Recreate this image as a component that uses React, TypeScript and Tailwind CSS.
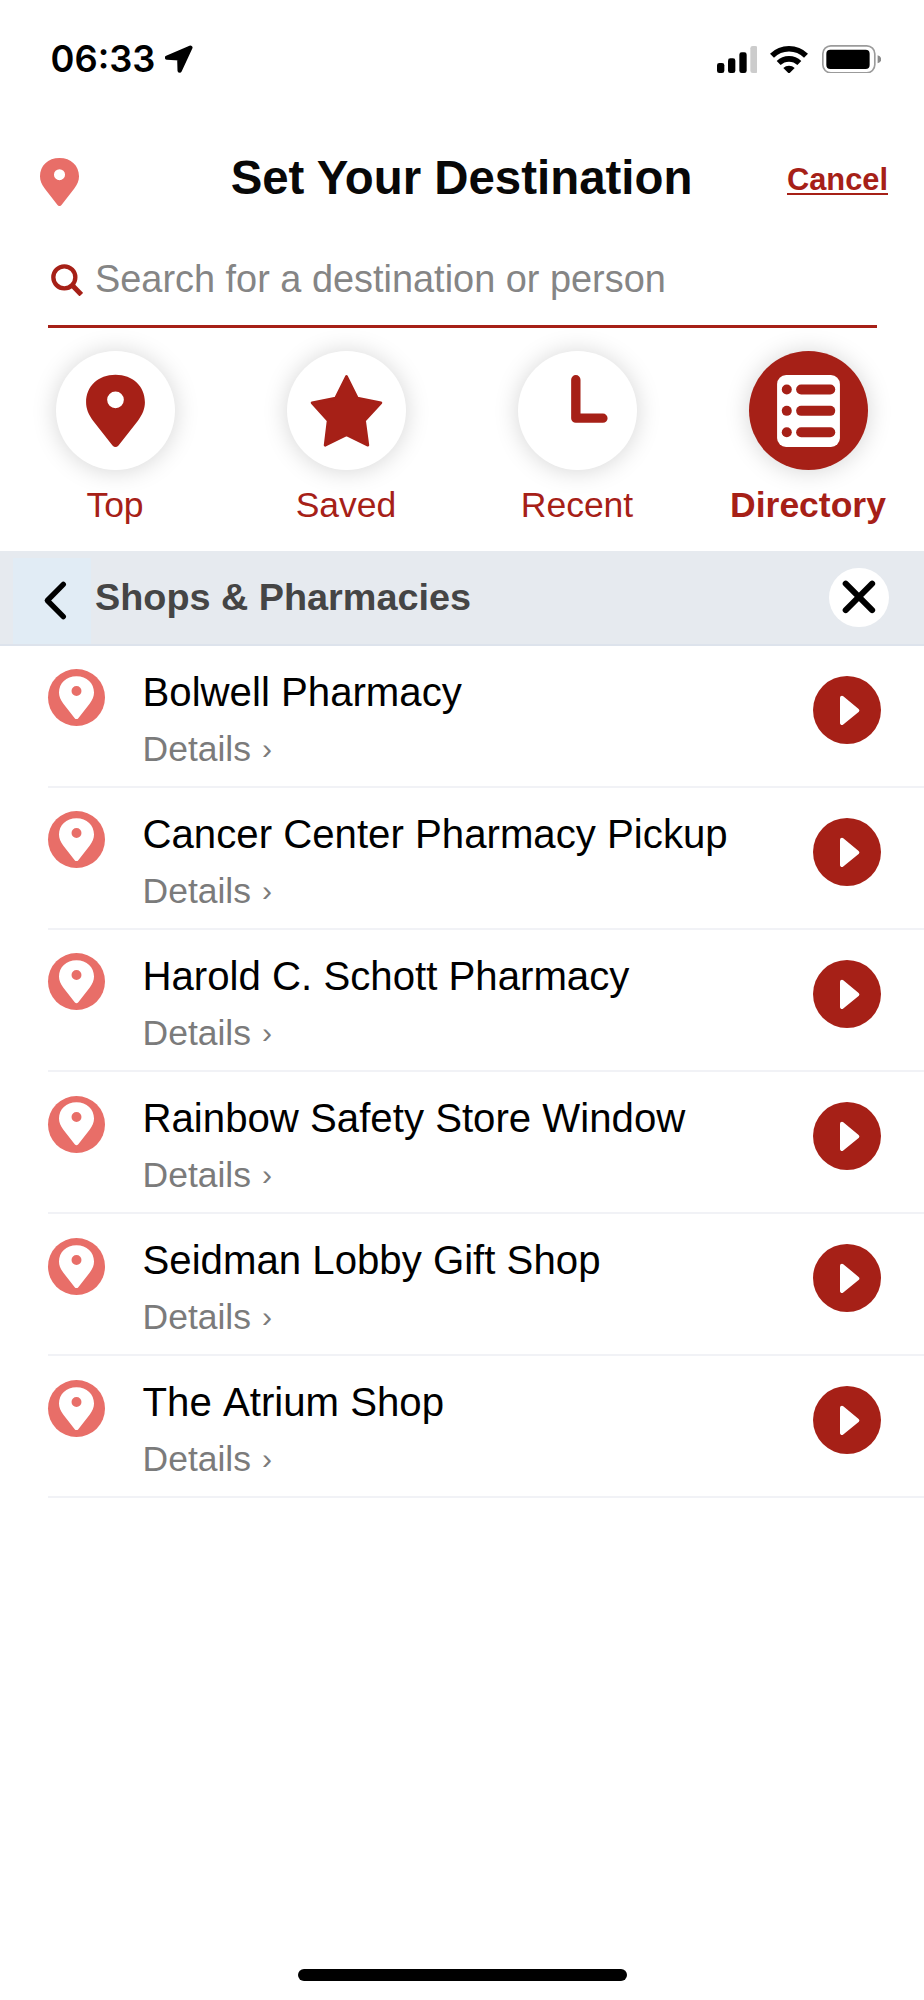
import { useState } from 'react';

type TabKey = 'top' | 'saved' | 'recent' | 'directory';

const places = [
  'Bolwell Pharmacy',
  'Cancer Center Pharmacy Pickup',
  'Harold C. Schott Pharmacy',
  'Rainbow Safety Store Window',
  'Seidman Lobby Gift Shop',
  'The Atrium Shop',
];

const PIN_PATH =
  'M88 0C36 0 0 35 0 82C0 102 7 118 22 139L79 212Q88 221 97 212L154 139C169 118 176 102 176 82C176 35 140 0 88 0ZM88 50a25 25 0 1 1 0 50a25 25 0 1 1 0-50Z';

const Pin = ({ className }: { className?: string }) => (
  <svg viewBox="0 0 176 216" fill="currentColor" fillRule="evenodd" className={className}>
    <path d={PIN_PATH} />
  </svg>
);

// Tab icons, all drawn on the full circle
const TopIcon = () => (
  <svg viewBox="0 0 356 356" fill="currentColor" fillRule="evenodd" className="w-full h-full">
    <path transform="translate(90 71)" d={PIN_PATH} />
  </svg>
);

const SavedIcon = () => (
  <svg viewBox="0 0 356 356" fill="currentColor" stroke="currentColor" strokeWidth="8" strokeLinejoin="round" className="w-full h-full">
    <path d="M178 76L210.500 141L281 155L232 208L242 282L178 251L114 282L123 208L75 155L145.500 141Z" />
  </svg>
);

const RecentIcon = () => (
  <svg viewBox="0 0 356 356" fill="none" stroke="currentColor" strokeWidth="28" strokeLinecap="round" strokeLinejoin="round" className="w-full h-full">
    <path d="M173 86V201H254" />
  </svg>
);

const DirectoryIcon = () => (
  <svg viewBox="0 0 356 356" className="w-full h-full">
    <rect x="84" y="72" width="188" height="215" rx="27" fill="currentColor" />
    <g fill="#a62017">
      {[115, 179, 243].map(y => (
        <g key={y}>
          <circle cx="113" cy={y} r="15" />
          <rect x="141" y={y - 15} width="117" height="30" rx="15" />
        </g>
      ))}
    </g>
  </svg>
);

const tabs: { key: TabKey; label: string; icon: () => React.ReactNode }[] = [
  { key: 'top',       label: 'Top',       icon: TopIcon },
  { key: 'saved',     label: 'Saved',     icon: SavedIcon },
  { key: 'recent',    label: 'Recent',    icon: RecentIcon },
  { key: 'directory', label: 'Directory', icon: DirectoryIcon },
];

const StatusBar = () => (
  <div className="h-[118px] pl-[50.500px] pr-[43px] flex items-center justify-between text-black">
    <div className="flex items-center">
      <span className="font-['Inter',sans-serif] font-semibold text-[36.300px] leading-[40px]">06:33</span>
      <svg viewBox="0 0 84 84" className="w-7 h-7 ml-[10px]" fill="currentColor" stroke="currentColor" strokeWidth="13" strokeLinejoin="round">
        <path d="M76 8L6 38L43 40L44 77Z" />
      </svg>
    </div>
    <div className="flex items-center">
      <svg viewBox="0 0 122 81" className="w-[40.700px] h-[27px] mr-[13px]" fill="currentColor">
        <rect x="0" y="51" width="22" height="30" rx="7" />
        <rect x="33" y="37" width="22" height="44" rx="7" />
        <rect x="67" y="19" width="22" height="62" rx="7" />
        <rect x="100" y="0" width="22" height="81" rx="7" fill="#cccccc" />
      </svg>
      <svg viewBox="0 0 114 86" className="w-[38px] h-[28.700px] mr-[13.500px]" fill="none" stroke="currentColor" strokeWidth="17">
        <path d="M6 32A73 73 0 0 1 108 32" />
        <path d="M26 54A45 45 0 0 1 88 54" />
        <path d="M57 86L40 69A25 25 0 0 1 74 69Z" fill="currentColor" stroke="none" />
      </svg>
      <svg viewBox="0 0 178 86" className="w-[59.300px] h-[28.700px]">
        <rect x="2.500" y="2.500" width="156" height="81" rx="24" fill="none" stroke="#9b9b9b" strokeWidth="5" />
        <rect x="13" y="14" width="130" height="58" rx="12" fill="#000" />
        <path d="M167 31Q178 35 178 43Q178 51 167 55Z" fill="#8a8a8a" />
      </svg>
    </div>
  </div>
);

const PlaceRow = ({ name }: { name: string }) => (
  <li className="h-[142.150px] ml-[47.500px] pr-[43px] flex items-start border-b-2 border-[#f1f2f6]">
    <div className="mt-[23.700px] w-[57px] h-[57px] rounded-full bg-[#e86e68] text-white flex items-center justify-center shrink-0">
      <Pin className="w-[35px] h-[43.300px]" />
    </div>
    <div className="ml-[38px] mt-[23px] flex-1">
      <div className="text-[40.200px] leading-[48px] text-black whitespace-nowrap [font-kerning:none]">{name}</div>
      <button className="flex items-center mt-[8px] text-[35.500px] leading-[48px] text-[#7b7b7b]">
        Details
        <span className="ml-[11px] text-[30px]">›</span>
      </button>
    </div>
    <button className="mt-[30px] w-[68px] h-[68px] rounded-full bg-[#a62017] shrink-0">
      <svg viewBox="0 0 204 204" className="w-full h-full" fill="#fff" stroke="#fff" strokeWidth="12" strokeLinejoin="round">
        <path d="M87 65L133 103.500L87 141Z" />
      </svg>
    </button>
  </li>
);

export default function App() {
  const [activeTab, setActiveTab] = useState<TabKey>('directory');
  const [query, setQuery] = useState('');

  return (
    <div className="w-[924px] h-[2000px] bg-white flex flex-col overflow-hidden font-['Liberation_Sans',Arial,sans-serif]">
      <StatusBar />

      {/* Header */}
      <header className="h-[119px] pl-[40px] pr-[36px] grid grid-cols-[1fr_auto_1fr] items-center">
        <Pin className="w-[39px] h-[48px] mt-[9px] text-[#e86e68]" />
        <h1 className="mr-[5px] text-[47.400px] leading-[56px] font-bold text-[#080808]">Set Your Destination</h1>
        <button className="justify-self-end mt-[4px] text-[30.800px] leading-[36px] font-bold text-[#a62017] underline decoration-2 underline-offset-[3px]">
          Cancel
        </button>
      </header>

      {/* Search */}
      <div className="h-[91px] ml-[47.500px] mr-[47.500px] pl-[3px] pb-[3px] flex items-center border-b-3 border-[#a62017]">
        <svg viewBox="0 0 96 96" className="w-8 h-8 mr-[12.500px] shrink-0" fill="none" stroke="#a62017" strokeWidth="13">
          <circle cx="40" cy="40" r="33" />
          <path d="M63 63L91 92" strokeWidth="15" />
        </svg>
        <input
          className="flex-1 h-[48px] text-[37.900px] text-black placeholder:text-[#858585] outline-none"
          value={query}
          onChange={e => setQuery(e.target.value)}
          placeholder="Search for a destination or person"
        />
      </div>

      {/* Tabs */}
      <nav className="h-[223px] pt-[23.400px] grid grid-cols-4">
        {tabs.map(({ key, label, icon: Icon }) => {
          const active = key === activeTab;
          return (
            <button key={key} onClick={() => setActiveTab(key)} className="flex flex-col items-center text-[#a62017]">
              <span
                className={`w-[119px] h-[119px] rounded-full shadow-[0_1px_24px_rgba(0,0,0,0.17)] ${
                  active ? 'bg-[#a62017] text-white' : 'bg-white'
                }`}
              >
                <Icon />
              </span>
              <span className={`mt-[15px] mr-[1px] text-[35.500px] leading-[40px] ${active ? 'font-bold' : ''}`}>{label}</span>
            </button>
          );
        })}
      </nav>

      {/* Category bar */}
      <div className="h-[94.500px] pl-[12.500px] pr-[35.500px] flex items-center bg-[#e6eaef] border-b-2 border-[#dde3ec] shrink-0">
        <button className="self-end w-[78px] h-[86px] bg-[#e1ecf5] shrink-0">
          <svg viewBox="0 0 234 258" className="w-full h-full" fill="none" stroke="#000" strokeWidth="16" strokeLinecap="round" strokeLinejoin="round">
            <path d="M151 79L103 127.500L151 176" />
          </svg>
        </button>
        <h2 className="ml-[4.500px] flex-1 text-[37.800px] leading-[44px] font-bold text-[#454545]">Shops &amp; Pharmacies</h2>
        <button className="w-[59.500px] h-[59.500px] rounded-full bg-white">
          <svg viewBox="0 0 178 178" className="w-full h-full" fill="none" stroke="#000" strokeWidth="18" strokeLinecap="round">
            <path d="M50 47L129 126M129 47L50 126" />
          </svg>
        </button>
      </div>

      <ul className="flex-1">
        {places.map(name => (
          <PlaceRow key={name} name={name} />
        ))}
      </ul>

      {/* Home indicator */}
      <div className="w-[329px] h-3 mb-[19px] self-center rounded-full bg-black" />
    </div>
  );
}
